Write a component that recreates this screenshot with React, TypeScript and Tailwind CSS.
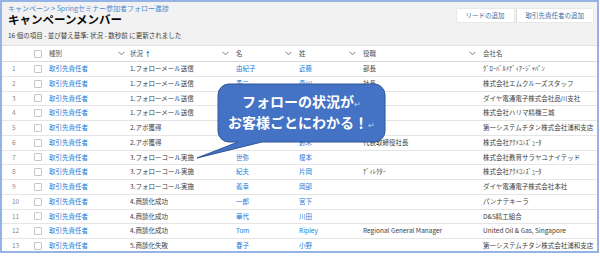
import React from 'react';

interface Member {
  no: number;
  status: string;
  first: string;
  last: string;
  title: string;
  company: string;
}

const members: Member[] = [
  { no: 1, status: '1.フォローメール送信', first: '由紀子', last: '近藤', title: '部長', company: 'ｸﾞﾛｰﾊﾞﾙﾒﾃﾞｨｱ･ｼﾞｬﾊﾟﾝ' },
  { no: 2, status: '1.フォローメール送信', first: '勇二', last: '森川', title: '社長', company: '株式会社エムクルーズスタッフ' },
  { no: 3, status: '1.フォローメール送信', first: '健太', last: '高橋', title: '', company: 'ダイヤ電通電子株式会社品川支社' },
  { no: 4, status: '1.フォローメール送信', first: '直樹', last: '中村', title: '', company: '株式会社ハリマ精機三城' },
  { no: 5, status: '2.アポ獲得', first: '和也', last: '山本', title: '', company: '第一システムチタン株式会社浦和支店' },
  { no: 6, status: '2.アポ獲得', first: '真一', last: '鈴木', title: '代表取締役社長', company: '株式会社ｱｸﾒｺﾝｽﾞｭｰﾀ' },
  { no: 7, status: '3.フォローコール実施', first: '世弥', last: '榎本', title: '', company: '株式会社教育サラヤユナイテッド' },
  { no: 8, status: '3.フォローコール実施', first: '紀夫', last: '片岡', title: 'ﾃﾞｨﾚｸﾀｰ', company: '株式会社ｱｸﾒｺﾝｽﾞｭｰﾀ' },
  { no: 9, status: '3.フォローコール実施', first: '義幸', last: '岡部', title: '', company: 'ダイヤ電通電子株式会社本社' },
  { no: 10, status: '4.商談化成功', first: '一郎', last: '宮下', title: '', company: 'パンナテキーラ' },
  { no: 11, status: '4.商談化成功', first: '華代', last: '川田', title: '', company: 'D&S精工組合' },
  { no: 12, status: '4.商談化成功', first: 'Tom', last: 'Ripley', title: 'Regional General Manager', company: 'United Oil & Gas, Singapore' },
  { no: 13, status: '5.商談化失敗', first: '春子', last: '小野', title: '', company: '第一システムチタン株式会社浦和支店' },
];

const cols = 'grid grid-cols-[28px_16px_81px_104px_63px_64px_120px_119px]';

const Chevron = () => (
  <svg width="7" height="5" viewBox="0 0 7 5" className="shrink-0">
    <path d="M0.5 0.8 L3.5 3.8 L6.5 0.8" fill="none" stroke="#706e6b" strokeWidth="0.9" />
  </svg>
);

const HeaderCell = ({ label, sort, pl }: { label: string; sort?: boolean; pl: string }) => (
  <div className={`flex items-center justify-between ${pl} pr-[2px]`}>
    <span className="flex items-center gap-[3px]">
      {label}
      {sort && <span className="text-[#0070d2] text-[8px] leading-none">🠕</span>}
    </span>
    <Chevron />
  </div>
);

const App = () => {
  return (
    <div
      className="w-[600px] h-[257px] bg-white relative overflow-hidden"
      style={{ fontFamily: '"Noto Sans CJK JP", "Liberation Sans", sans-serif' }}
    >
      <div className="w-[599px] h-[253px] border-2 border-[#95b3e4] overflow-hidden bg-white">
        {/* page header */}
        <div className="h-[43px] bg-[#f3f2f2] flex justify-between pl-[6px] pr-[3px]">
          <div className="flex flex-col">
            <div className="text-[7px] leading-[9px] text-[#4a8bd4] mt-[2px]">
              キャンペーン &gt; Springセミナー参加者フォロー進捗
            </div>
            <div className="text-[11.5px] leading-[13px] font-bold text-[#080707]">キャンペーンメンバー</div>
            <div className="text-[6.5px] leading-[8px] text-[#3e3e3c] mt-[5px]">
              16 個の項目 - 並び替え基準: 状況 - 数秒前 に更新されました
            </div>
          </div>
          <div className="flex mt-[6px] h-[15px]">
            <div className="bg-white border border-[#e8e8e8] rounded-l-[2px] px-[9px] text-[6.5px] leading-[13px] text-[#4a6ea0]">
              リードの追加
            </div>
            <div className="bg-white border border-[#e8e8e8] border-l-[#dddbda] rounded-r-[2px] px-[9px] text-[6.5px] leading-[13px] text-[#4a6ea0] ml-[1px]">
              取引先責任者の追加
            </div>
          </div>
        </div>

        {/* table */}
        <div className="border-t border-[#e0e0e0]">
          <div className={`${cols} h-[16px] items-center text-[6.5px] text-[#514f4d] border-b border-[#dddbda]`}>
            <div />
            <div className="pl-[4px]">
              <div className="w-[8px] h-[8px] border border-[#c9c7c5] rounded-[1px] bg-white" />
            </div>
            <HeaderCell label="種別" pl="pl-[3px]" />
            <HeaderCell label="状況" sort pl="pl-[3px]" />
            <HeaderCell label="名" pl="pl-[5px]" />
            <HeaderCell label="姓" pl="pl-[5px]" />
            <HeaderCell label="役職" pl="pl-[5px]" />
            <div className="pl-[5px]">会社名</div>
          </div>
          {members.map(m => (
            <div
              key={m.no}
              className={`${cols} h-[14.75px] items-center text-[6.5px] text-[#3e3e3c] border-b border-[#e5e5e5] whitespace-nowrap`}
            >
              <div className="pl-[10px] text-[#8a8886]">{m.no}</div>
              <div className="pl-[4px]">
                <div className="w-[8px] h-[8px] border border-[#c9c7c5] rounded-[1px] bg-white" />
              </div>
              <div className="pl-[3px] text-[#1b7ad6]">取引先責任者</div>
              <div className="pl-[3px]">{m.status}</div>
              <div className="pl-[5px] text-[#1b7ad6]">{m.first}</div>
              <div className="pl-[5px] text-[#1b7ad6]">{m.last}</div>
              <div className="pl-[5px] overflow-hidden">{m.title}</div>
              <div className="pl-[5px] overflow-hidden">{m.company}</div>
            </div>
          ))}
        </div>
      </div>

      {/* callout bubble */}
      <svg className="absolute left-0 top-0 pointer-events-none" width="600" height="257">
        <path
          d="M229 84 H374 A11 11 0 0 1 385 95 V131 A11 11 0 0 1 374 142 H262 L197 158 L238 142 H229 A11 11 0 0 1 218 131 V95 A11 11 0 0 1 229 84 Z"
          fill="#4472c4"
          stroke="#2f5597"
          strokeWidth="1"
        />
      </svg>
      <div className="absolute left-[218px] top-[84px] w-[167px] h-[58px] flex flex-col items-center justify-center text-white font-bold text-[14px] leading-[19px]">
        <div>
          フォローの状況が<span className="text-[#c8d3e8] font-normal text-[8px]">↵</span>
        </div>
        <div>
          お客様ごとにわかる！<span className="text-[#c8d3e8] font-normal text-[8px]">↵</span>
        </div>
      </div>
    </div>
  );
};

export default App;
